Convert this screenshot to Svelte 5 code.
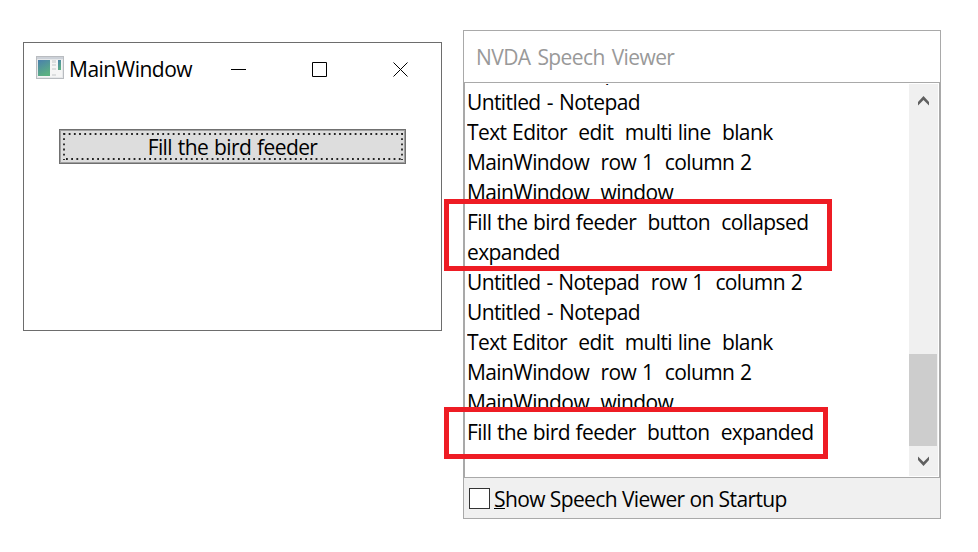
<script>
  const lines = [
    { text: 'Untitled - Notepad', ws: 1.3 },
    { text: 'Untitled - Notepad', ws: 1.3 },
    { text: 'Text Editor  edit  multi line  blank', ws: 0.8 },
    { text: 'MainWindow  row 1  column 2', ws: 0.87 },
    { text: 'MainWindow  window', ws: 0.9 },
    { text: 'Fill the bird feeder  button  collapsed', ws: 0.8 },
    { text: 'expanded', ws: 0 },
    { text: 'Untitled - Notepad  row 1  column 2', ws: 0.95 },
    { text: 'Untitled - Notepad', ws: 1.3 },
    { text: 'Text Editor  edit  multi line  blank', ws: 0.8 },
    { text: 'MainWindow  row 1  column 2', ws: 0.87 },
    { text: 'MainWindow  window', ws: 0.9 },
    { text: 'Fill the bird feeder  button  expanded', ws: 0.7 }
  ];
</script>

<div class="desktop">
  <section class="main-window">
    <header>
      <svg class="app-icon" width="28" height="23" viewBox="0 0 28 23">
        <defs>
          <linearGradient id="pane" x1="0" y1="0" x2="0.4" y2="1">
            <stop offset="0" stop-color="#4a80ad" /><stop offset="1" stop-color="#5cb083" />
          </linearGradient>
        </defs>
        <rect x="0.5" y="0.5" width="27" height="22" fill="#e6e8ea" stroke="#b9bcc0" />
        <rect x="1" y="1" width="26" height="2" fill="#ccd1d8" />
        <path d="M2 4h24v17H2z" fill="#f5f5f5" />
        <rect x="2" y="4" width="12" height="16" fill="url(#pane)" />
        <path d="M16 4h4v3h-4zM16 8h4v2h-4zM16 12h4v2h-4zM16 18h4v2h-4z" fill="#dcdedf" />
        <rect x="22" y="4" width="3" height="10" fill="url(#pane)" />
      </svg>
      <span class="title">MainWindow</span>
      <svg class="controls" width="177" height="15" viewBox="0 0 177 15" fill="none" stroke="#000">
        <path d="M0 7.5h15M81.500 .5h14v14h-14zM162.500 .5l14 14M176.500 .5l-14 14" />
      </svg>
    </header>
    <button><span>Fill the bird feeder</span>
      <svg width="340" height="27" viewBox="0 0 340 27" fill="none" stroke="#222" stroke-width="1.8" stroke-dasharray="1.8 3.400">
        <path d="M.5 1H340M3 26H340M1 0V27M339 0V27" />
      </svg>
    </button>
  </section>

  <section class="viewer">
    <header>NVDA Speech Viewer</header>
    <div class="body">
      <div class="log">
        {#each lines as line}
          <div class="line"><span style:word-spacing="{line.ws}px">{line.text}</span></div>
        {/each}
      </div>
      <div class="scrollbar">
        <svg width="29" height="36" viewBox="0 0 29 36" fill="#606060"><path d="M9 18l5.500-6 5.500 6v3.500l-5.500-5.500-5.500 5.500z" /></svg>
        <div class="track"><div class="thumb"></div></div>
        <svg width="29" height="30" viewBox="0 0 29 30" fill="#606060"><path d="M9 14l5.500 6 5.500-6v-3.500l-5.500 5.500-5.500-5.500z" /></svg>
      </div>
    </div>
    <footer><i class="box"></i><span class="startup"><u>S</u>how Speech Viewer on Startup</span></footer>
  </section>
  <div class="mark first"></div>
  <div class="mark second"></div>
</div>

<style>
  :global(body) { background: #fff; }
  .desktop {
    position: relative; box-sizing: border-box; width: 978px; height: 552px; overflow: hidden;
    display: flex; align-items: flex-start; gap: 21px; padding: 30px 0 0 23px;
    font: 21px/30px "Open Sans", "Noto Sans", sans-serif; color: #000;
  }
  section { box-sizing: border-box; flex: none; }
  .main-window { width: 419px; height: 289px; margin-top: 12px; border: 1px solid #6d6d6d; }
  .main-window header { display: flex; align-items: center; height: 52px; padding-left: 12px; }
  .title { box-sizing: border-box; width: 167px; padding-left: 5px; white-space: nowrap; letter-spacing: -0.5px; }
  .app-icon { flex: none; margin-top: -3px; }
  .controls { flex: none; }
  button {
    position: relative; box-sizing: border-box; display: block; width: 347px; height: 35px;
    margin: 34px 0 0 35px; padding: 2px 0 0; border: 1px solid #707070; background: #ddd;
    box-shadow: inset 0 0 0 1px #a0a0a0; font: inherit; line-height: 31px; color: #000;
    letter-spacing: -0.6px; word-spacing: 1px;
  }
  button svg { position: absolute; left: 3px; top: 3px; }
  .viewer { width: 478px; height: 489px; border: 1px solid #a9a9a9; display: flex; flex-direction: column; }
  .viewer header {
    box-sizing: border-box; height: 51px; padding: 11px 0 0 12px; color: #999;
    letter-spacing: -0.6px; word-spacing: 2.1px;
  }
  .body {
    box-sizing: border-box; height: 396px; display: flex; border: 1px solid #a9a9a9;
    padding: 1px 1px 1px 2px;
  }
  .log { flex: 1; overflow: hidden; letter-spacing: -0.6px; }
  .line { height: 30px; white-space: pre; }
  .line:first-child { margin-top: -27px; }
  .scrollbar { width: 29px; background: #f0f0f0; display: flex; flex-direction: column; }
  .track { flex: 1; display: flex; align-items: flex-end; }
  .thumb { width: 28px; height: 92px; background: #cdcdcd; }
  footer { flex: 1; display: flex; align-items: center; background: #f0f0f0; padding-left: 5px; gap: 4px; }
  .box { width: 21px; height: 21px; box-sizing: border-box; border: 1px solid #333; background: #fff; }
  .startup { padding-top: 2px; white-space: nowrap; letter-spacing: -0.6px; }
  u { text-decoration-thickness: 1px; }
  .mark { position: absolute; box-sizing: border-box; left: 444px; border: 5px solid #ee1c24; }
  .first { top: 199px; width: 388px; height: 72px; }
  .second { top: 407px; width: 384px; height: 52px; }
</style>
